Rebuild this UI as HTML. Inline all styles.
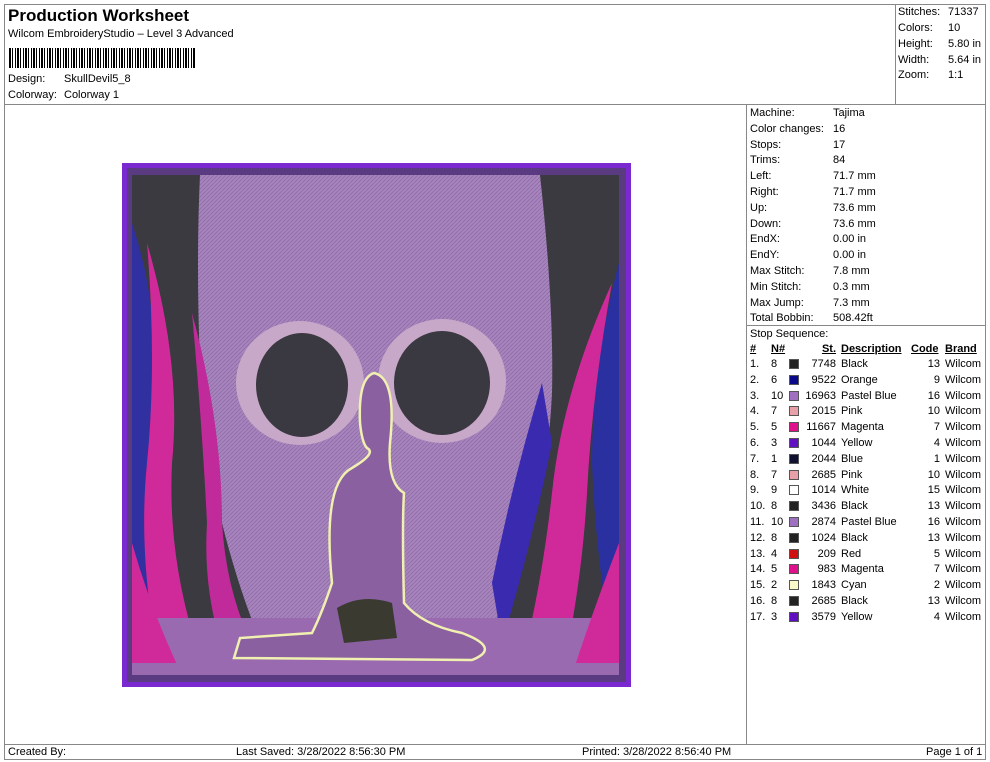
<!DOCTYPE html>
<html><head><meta charset="utf-8"><style>
*{margin:0;padding:0;box-sizing:border-box}
body{width:990px;height:762px;background:#fff;font-family:"Liberation Sans",Arial,sans-serif;font-size:11px;color:#000;position:relative;overflow:hidden}
.a{position:absolute;white-space:nowrap}
.l{position:absolute;background:#888}
.r{text-align:right}
</style></head><body>
<div class="l" style="left:4px;top:4px;width:982px;height:1px"></div>
<div class="l" style="left:4px;top:4px;width:1px;height:756px"></div>
<div class="l" style="left:985px;top:4px;width:1px;height:756px"></div>
<div class="l" style="left:4px;top:104px;width:982px;height:1px"></div>
<div class="l" style="left:4px;top:744px;width:982px;height:1px"></div>
<div class="l" style="left:4px;top:759px;width:982px;height:1px"></div>
<div class="l" style="left:895px;top:4px;width:1px;height:100px"></div>
<div class="l" style="left:746px;top:104px;width:1px;height:640px"></div>
<div class="l" style="left:746px;top:325px;width:240px;height:1px"></div>

<div class="a" style="left:8px;top:6px;font-size:17px;font-weight:bold">Production Worksheet</div>
<div class="a" style="left:8px;top:28px">Wilcom EmbroideryStudio – Level 3 Advanced</div>
<div class="a" style="left:9px;top:48px;width:186px;height:20px;background:repeating-linear-gradient(90deg,#000 0 2px,#fff 2px 3px,#000 3px 4px,#fff 4px 6px,#000 6px 7px,#fff 7px 8px)"></div>
<div class="a" style="left:8px;top:73px">Design:</div><div class="a" style="left:64px;top:73px">SkullDevil5_8</div>
<div class="a" style="left:8px;top:89px">Colorway:</div><div class="a" style="left:64px;top:89px">Colorway 1</div>

<div class="a" style="left:898px;top:6px">Stitches:</div><div class="a" style="left:948px;top:6px">71337</div>
<div class="a" style="left:898px;top:22px">Colors:</div><div class="a" style="left:948px;top:22px">10</div>
<div class="a" style="left:898px;top:38px">Height:</div><div class="a" style="left:948px;top:38px">5.80 in</div>
<div class="a" style="left:898px;top:54px">Width:</div><div class="a" style="left:948px;top:54px">5.64 in</div>
<div class="a" style="left:898px;top:69px">Zoom:</div><div class="a" style="left:948px;top:69px">1:1</div>

<div class="a" style="left:750px;top:106px;line-height:15.8px">Machine:<br>Color changes:<br>Stops:<br>Trims:<br>Left:<br>Right:<br>Up:<br>Down:<br>EndX:<br>EndY:<br>Max Stitch:<br>Min Stitch:<br>Max Jump:<br>Total Bobbin:<br>Stop Sequence:</div>
<div class="a" style="left:833px;top:106px;line-height:15.8px">Tajima<br>16<br>17<br>84<br>71.7 mm<br>71.7 mm<br>73.6 mm<br>73.6 mm<br>0.00 in<br>0.00 in<br>7.8 mm<br>0.3 mm<br>7.3 mm<br>508.42ft</div>

<div class="a" style="left:750px;top:343px;font-weight:bold;text-decoration:underline">#</div>
<div class="a" style="left:771px;top:343px;font-weight:bold;text-decoration:underline">N#</div>
<div class="a r" style="left:800px;top:343px;width:36px;font-weight:bold;text-decoration:underline">St.</div>
<div class="a" style="left:841px;top:343px;font-weight:bold;text-decoration:underline">Description</div>
<div class="a" style="left:911px;top:343px;font-weight:bold;text-decoration:underline">Code</div>
<div class="a" style="left:945px;top:343px;font-weight:bold;text-decoration:underline">Brand</div>

<div id="rows"></div>
<script>
const d=[[8,'#222',7748,'Black',13],[6,'#0a0a8a',9522,'Orange',9],[10,'#a070c0',16963,'Pastel Blue',16],[7,'#e8a0a8',2015,'Pink',10],[5,'#e0108a',11667,'Magenta',7],[3,'#6010c0',1044,'Yellow',4],[1,'#101030',2044,'Blue',1],[7,'#e8a0a8',2685,'Pink',10],[9,'#fff',1014,'White',15],[8,'#222',3436,'Black',13],[10,'#a070c0',2874,'Pastel Blue',16],[8,'#222',1024,'Black',13],[4,'#d01010',209,'Red',5],[5,'#e0108a',983,'Magenta',7],[2,'#f8f8c8',1843,'Cyan',2],[8,'#222',2685,'Black',13],[3,'#6010c0',3579,'Yellow',4]];
let h='';d.forEach((r,i)=>{const y=358+i*15.8;
h+=`<div class="a" style="left:750px;top:${y}px">${i+1}.</div><div class="a" style="left:771px;top:${y}px">${r[0]}</div><div class="a" style="left:789px;top:${y+1}px;width:10px;height:10px;background:${r[1]};border:1px solid #555"></div><div class="a r" style="left:800px;top:${y}px;width:36px">${r[2]}</div><div class="a" style="left:841px;top:${y}px">${r[3]}</div><div class="a r" style="left:905px;top:${y}px;width:35px">${r[4]}</div><div class="a" style="left:945px;top:${y}px">Wilcom</div>`});
document.getElementById('rows').outerHTML=h;
</script>

<svg class="a" style="left:122px;top:163px" width="509" height="524" viewBox="0 0 509 524">
<defs><pattern id="st" width="4" height="4" patternUnits="userSpaceOnUse"><path d="M0 4L4 0" stroke="#7a4e90" stroke-width="0.8" opacity="0.5"/></pattern></defs>
<rect x="0" y="0" width="509" height="524" fill="#7a28d0"/>
<rect x="5" y="5" width="499" height="514" fill="#5a3a80"/>
<rect x="10" y="12" width="487" height="500" fill="#3a3a40"/>
<path d="M78 12 L418 12 Q432 140 430 230 Q425 330 400 390 Q380 440 370 470 L135 470 Q115 420 100 360 Q80 280 78 200 Q74 100 78 12Z" fill="#a684bc"/>
<path d="M78 12 L418 12 Q432 140 430 230 Q425 330 400 390 Q380 440 370 470 L135 470 Q115 420 100 360 Q80 280 78 200 Q74 100 78 12Z" fill="url(#st)"/>
<path d="M10 60 Q40 150 30 250 Q20 350 40 512 L10 512Z" fill="#3030a0"/>
<path d="M25 80 Q60 200 50 300 Q45 400 80 500 L40 512 Q15 400 25 300 Q35 200 25 80Z" fill="#d02a9a"/>
<path d="M70 150 Q100 260 100 360 Q105 440 140 500 L110 512 Q80 440 85 360 Q80 260 70 150Z" fill="#c02a9a"/>
<path d="M497 100 Q470 200 470 300 Q475 420 497 512Z" fill="#2a30a0"/>
<path d="M490 120 Q440 230 430 330 Q420 420 400 500 L440 512 Q460 420 465 330 Q470 230 490 120Z" fill="#d02a9a"/>
<path d="M420 220 Q390 320 370 420 L380 480 Q410 380 430 280Z" fill="#3a2ab0"/>
<rect x="10" y="455" width="487" height="57" fill="#9a6ab0"/>
<path d="M10 380 Q30 450 60 512 L10 512Z" fill="#d02a9a"/>
<path d="M497 380 Q470 450 450 512 L497 512Z" fill="#d02a9a"/>
<ellipse cx="178" cy="220" rx="64" ry="62" fill="#c8a8c8"/>
<ellipse cx="320" cy="218" rx="64" ry="62" fill="#c8a8c8"/>
<ellipse cx="180" cy="222" rx="46" ry="52" fill="#3a3840"/>
<ellipse cx="320" cy="220" rx="48" ry="52" fill="#3a3840"/>
<path d="M252 210 Q236 215 238 260 Q240 280 245 285 Q255 290 230 305 Q200 320 210 420 Q200 450 190 470 L118 475 L112 495 L350 497 Q380 485 340 470 Q300 462 282 440 Q280 360 282 330 Q265 320 268 280 Q275 215 252 210Z" fill="#8a60a0" stroke="#f0f0b0" stroke-width="2.5"/>
<path d="M215 445 Q240 430 270 440 L275 475 L222 480Z" fill="#3a3a30"/>
<rect x="10" y="500" width="487" height="12" fill="#9a6ab0"/>
</svg>

<div class="a" style="left:8px;top:746px">Created By:</div>
<div class="a" style="left:236px;top:746px">Last Saved: 3/28/2022 8:56:30 PM</div>
<div class="a" style="left:582px;top:746px">Printed: 3/28/2022 8:56:40 PM</div>
<div class="a" style="left:926px;top:746px">Page 1 of 1</div>
</body></html>
